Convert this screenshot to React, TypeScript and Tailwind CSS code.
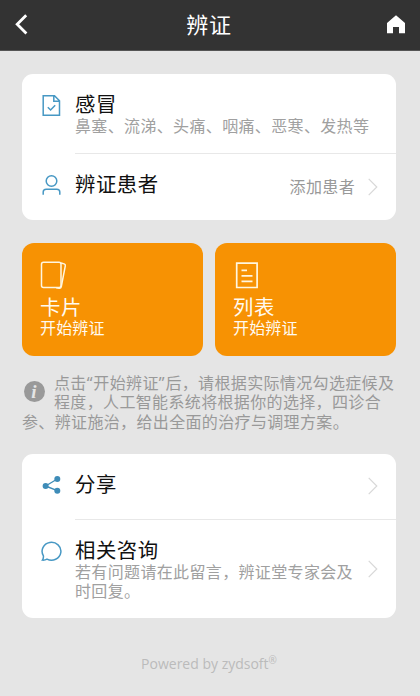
import type { ReactNode } from 'react'

const actions = [
  { title: '卡片', sub: '开始辨证', icon: <CardsIcon /> },
  { title: '列表', sub: '开始辨证', icon: <ListIcon /> },
]

function CardsIcon() {
  return (
    <svg width="27" height="29" viewBox="0 0 27 29" fill="none" stroke="#fff6e0" strokeWidth="1.5">
      <rect x="1.5" y="1.3" width="19.5" height="25.3" rx="2" />
      <path d="M21 2l3.2.9q1.4.5 1.1 1.9L21.3 25.7q-.4 1.8-2.1 1.6l-3-.6" />
    </svg>
  )
}

function ListIcon() {
  return (
    <svg width="27" height="29" viewBox="0 0 27 29" fill="none" stroke="#fff6e0" strokeWidth="1.7">
      <path d="M3.7 2.1h20.4v24.4H3.7zM8.5 9.3h5.5M8.5 14.8h11M8.5 20.3h11" />
    </svg>
  )
}

function DocIcon() {
  return (
    <svg width="22" height="22" viewBox="0 0 22 22" fill="none" stroke="#4798c4" strokeWidth="1.5">
      <path d="M3.2 1.7h11.3l5 5v14.5H3.2zM13.8 1.7v5.5h5.6M7.8 13.3l2.8 2.7 4.6-4.8" />
    </svg>
  )
}

function UserIcon() {
  return (
    <svg width="22" height="22" viewBox="0 0 22 22" fill="none" stroke="#4798c4" strokeWidth="1.5">
      <circle cx="11.5" cy="7" r="5.3" />
      <path d="M3.2 20.8v-2.7q0-2.9 3-2.9h10.6q3 0 3 2.9v2.7" />
    </svg>
  )
}

function ShareIcon() {
  return (
    <svg width="22" height="22" viewBox="0 0 22 22" fill="#3e8cb8" stroke="#3e8cb8">
      <path d="M17.3 5L5.6 12l11.7 4.6" fill="none" strokeWidth="1.4" />
      <circle cx="5.6" cy="12" r="3" stroke="none" />
      <circle cx="17.3" cy="5" r="3" stroke="none" />
      <circle cx="17.3" cy="16.7" r="3" stroke="none" />
    </svg>
  )
}

function ChatIcon() {
  return (
    <svg width="22" height="22" viewBox="0 0 22 22" fill="none" stroke="#4798c4" strokeWidth="1.5">
      <path d="M3.4 15.8a9.4 8.9 0 1 1 3.6 3.3q-2 1.2-4.6 1 1.3-2 1-4.3z" />
    </svg>
  )
}

function Arrow() {
  return (
    <svg width="10" height="18" viewBox="0 0 10 18" fill="none" stroke="#d8d8d8" strokeWidth="1.2">
      <path d="M.7.8L8.8 9 .7 17.2" />
    </svg>
  )
}

function Title({ children }: { children: ReactNode }) {
  return <h2 className="mb-[2px] flex-1 text-[20.4px] leading-[22px] tracking-[0.5px] text-[#111]">{children}</h2>
}

function Row({ icon, children }: { icon: ReactNode; children: ReactNode }) {
  return (
    <div className="flex pl-[18px]">
      <div className="w-[35px] shrink-0 pt-[20px]">{icon}</div>
      {children}
    </div>
  )
}

export default function App() {
  return (
    <div className="min-h-[696px] overflow-hidden bg-[#e5e5e5] font-['Noto_Sans','Noto_Sans_CJK_SC',sans-serif] text-[16px] leading-[19.3px] tracking-[0.35px] whitespace-nowrap text-[#999]">
      {/* Header */}
      <header className="flex h-[51px] items-center justify-between border-b border-[#555] bg-[#333] pr-[14px] pl-[15px] text-white">
        <svg width="13" height="22" viewBox="0 0 13 22" fill="none" stroke="white" strokeWidth="2.8">
          <path d="M11.2 1.2L2.2 10.2l9.2 9.2" />
        </svg>
        <h1 className="-mt-[2px] pl-[4px] text-[22px] leading-[30px] tracking-[0.8px]">辨证</h1>
        <svg width="20" height="20" viewBox="0 0 20 20" fill="white">
          <path d="M10 .2l9 7.7v10.3h-6v-6.2H7v6.2H1V7.9z" />
        </svg>
      </header>

      <main className="flex flex-col pr-[24px] pl-[22px]">
        <section className="mt-[23px] h-[146px] rounded-[11px] bg-white">
          <Row icon={<DocIcon />}>
            <div className="h-[80px] flex-1 border-b border-[#e8e8e8] pt-[19px]">
              <Title>感冒</Title>
              <p className="text-[#a0a0a0]">鼻塞、流涕、头痛、咽痛、恶寒、发热等</p>
            </div>
          </Row>
          <Row icon={<UserIcon />}>
            <div className="flex flex-1 items-start pt-[19px] pr-[18px]">
              <Title>辨证患者</Title>
              <p className="mt-[5px] mr-[13px]">添加患者</p>
              <div className="mt-[5px]"><Arrow /></div>
            </div>
          </Row>
        </section>

        {/* Entry buttons */}
        <section className="mt-[23px] flex gap-[12px]">
          {actions.map((item) => (
            <button key={item.title} className="flex h-[113px] w-[181px] flex-col items-start justify-start rounded-[12px] bg-[#f79203] pt-[18px] pl-[18px] text-left text-[#fffaf0]">
              {item.icon}
              <span className="mt-[6px] mb-[2px] text-[20.4px] leading-[22px] tracking-[0.5px]">{item.title}</span>
              <span className="-mt-[1px] tracking-[0.15px]">{item.sub}</span>
            </button>
          ))}
        </section>

        <section className="mt-[18px] h-[58px]">
          <div className="float-left h-[38px] w-[32px] pt-[7px] pl-[2px]">
            <div className="flex h-[21px] w-[21px] items-center justify-center rounded-full bg-[#999] pr-px font-['Liberation_Serif',serif] text-[19px] font-bold text-[#e5e5e5] italic">i</div>
          </div>
          点击<span className="tracking-[0.9px]">“</span>开始辨证<span className="tracking-[0.9px]">”</span>后，请根据实际情况勾选症候及<br />
          程度，人工智能系统将根据你的选择，四诊合<br />
          参、辨证施治，给出全面的治疗与调理方案。
        </section>

        <section className="mt-[22px] h-[164px] rounded-[11px] bg-white">
          <Row icon={<ShareIcon />}>
            <div className="flex h-[66px] flex-1 items-start border-b border-[#e8e8e8] pt-[19px] pr-[18px]">
              <Title>分享</Title>
              <div className="mt-[4px]"><Arrow /></div>
            </div>
          </Row>
          <Row icon={<ChatIcon />}>
            <div className="flex flex-1 items-start pt-[19px] pr-[18px]">
              <div className="flex-1">
                <Title>相关咨询</Title>
                <p className="text-[#a0a0a0]">
                  若有问题请在此留言，辨证堂专家会及<br />时回复。
                </p>
              </div>
              <div className="mt-[21px]"><Arrow /></div>
            </div>
          </Row>
        </section>

        <footer className="mt-[36px] text-center font-['Open_Sans',sans-serif] text-[14px] tracking-[0px] text-[#bbb]">
          Powered by zydsoft<sup className="top-[-5px] text-[10px]">®</sup>
        </footer>
      </main>
    </div>
  )
}
